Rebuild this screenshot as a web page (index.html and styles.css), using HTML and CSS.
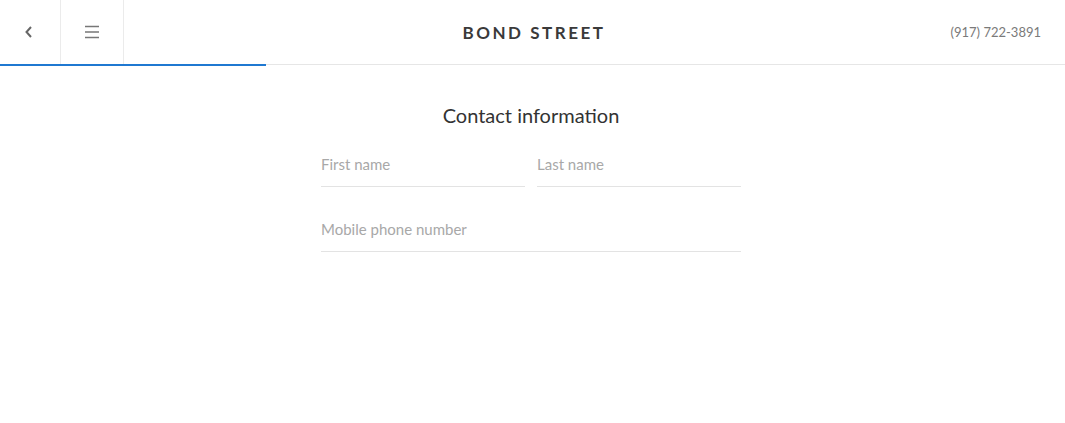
FILE: index.html
```html
<!DOCTYPE html>
<html lang="en">
<head>
  <meta charset="UTF-8" />
  <meta name="viewport" content="width=device-width, initial-scale=1" />
  <title>Bond Street</title>
  <link rel="stylesheet" href="styles.css">
</head>
<body>
  <header class="topbar">
    <div class="nav-buttons">
      <button class="icon-btn back-btn" aria-label="Back">
        <svg width="10" height="14" viewBox="0 0 10 14"><path d="M7 2 L2.5 7 L7 12" fill="none" stroke="#666" stroke-width="2"/></svg>
      </button>
      <button class="icon-btn menu-btn" aria-label="Menu">
        <svg width="16" height="14" viewBox="0 0 16 14"><path d="M1 1.5 H15 M1 7 H15 M1 12.5 H15" fill="none" stroke="#777" stroke-width="1.4"/></svg>
      </button>
    </div>
    <div class="brand">BOND STREET</div>
    <div class="phone">(917) 722-3891</div>
    <div class="progress"><div class="progress-fill" style="width: 25%"></div></div>
  </header>

  <main class="content">
    <h2 class="heading">Contact information</h2>
    <form class="form">
      <div class="row">
        <input class="field" type="text" placeholder="First name" />
        <input class="field" type="text" placeholder="Last name" />
      </div>
      <div class="row">
        <input class="field" type="tel" placeholder="Mobile phone number" />
      </div>
    </form>
  </main>
</body>
</html>
```
FILE: styles.css
```css
body {
  margin: 0;
  font-family: 'Lato', 'Open Sans', sans-serif;
  background: #ffffff;
  color: #333333;
}
.topbar {
  position: relative;
  height: 64px;
  display: grid;
  grid-template-columns: 1fr auto 1fr;
  align-items: center;
  border-bottom: 1px solid #e6e6e6;
}
.nav-buttons {
  display: flex;
  height: 100%;
}
.icon-btn {
  height: 100%;
  background: transparent;
  border: 0;
  border-right: 1px solid #ebebeb;
  padding: 0;
  display: flex;
  align-items: center;
  justify-content: center;
  cursor: pointer;
}
.back-btn {
  width: 61px;
  padding-right: 3px;
}
.menu-btn {
  width: 63px;
}
.brand {
  font-size: 17px;
  font-weight: 700;
  letter-spacing: 2.5px;
  color: #3a3a3a;
  padding-left: 3px;
}
.phone {
  text-align: right;
  padding-right: 24px;
  font-size: 13px;
  color: #7a7a7a;
}
.progress {
  position: absolute;
  left: 0;
  right: 0;
  bottom: -2px;
  height: 2px;
}
.progress-fill {
  height: 100%;
  background: #1f78d1;
}
.content {
  display: flex;
  flex-direction: column;
  align-items: center;
  padding-top: 38px;
  padding-right: 3px;
}
.heading {
  margin: 0 0 14px;
  font-size: 20px;
  font-weight: 400;
  color: #333333;
}
.form {
  width: 420px;
  display: flex;
  flex-direction: column;
  gap: 19px;
}
.row {
  display: flex;
  gap: 12px;
}
.field {
  flex: 1;
  min-width: 0;
  height: 45px;
  border: 0;
  border-bottom: 1px solid #e3e3e3;
  padding: 0;
  font-family: inherit;
  font-size: 15px;
  color: #333333;
  outline: none;
}
.field::placeholder {
  color: #a8a8a8;
}
```
